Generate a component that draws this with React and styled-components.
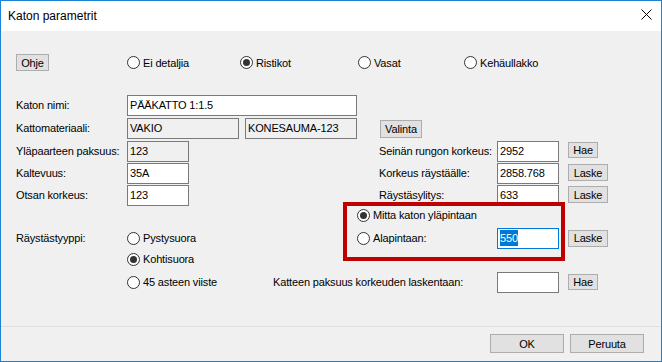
import React from "react";
import styled, { createGlobalStyle } from "styled-components";

const GlobalStyle = createGlobalStyle`
  html, body {
    margin: 0;
    padding: 0;
    background: #ffffff;
  }
`;

const Window = styled.div`
  width: 662px;
  height: 362px;
  box-sizing: border-box;
  border: 1px solid #1a83d6;
  display: flex;
  flex-direction: column;
  background: #f0f0f0;
  font-family: "Liberation Sans", Arial, sans-serif;
  font-size: 11px;
  letter-spacing: -0.15px;
  color: #000;
`;

const TitleBar = styled.div`
  height: 30px;
  flex: none;
  background: #fff;
  display: flex;
  align-items: center;
  justify-content: space-between;
  padding: 0 9px 0 7px;
  font-size: 12px;
  letter-spacing: 0;
  svg {
    margin-bottom: 3px;
  }
`;

const Body = styled.div`
  position: relative;
  flex: 1;
  padding: 23px 0 0 15px;
`;

const TopRow = styled.div`
  display: flex;
  align-items: center;
  height: 17px;
`;

const Cell = styled.div`
  width: ${(p) => p.$w}px;
  flex: none;
  display: flex;
  align-items: center;
`;

const Btn = styled.button`
  font: inherit;
  letter-spacing: inherit;
  color: #000;
  box-sizing: border-box;
  width: ${(p) => p.$w}px;
  height: ${(p) => p.$h || 17}px;
  margin-top: ${(p) => p.$mt || 0}px;
  padding: 0;
  background: #e1e1e1;
  border: 1px solid #adadad;
  border-radius: 0;
  grid-column: ${(p) => p.$col || "auto"};
  align-self: ${(p) => (p.$mt !== undefined ? "start" : "center")};
`;

const RadioLabel = styled.label`
  display: inline-flex;
  align-items: center;
  gap: 3px;
  white-space: nowrap;
  grid-column: ${(p) => p.$col || "auto"};
  padding-left: ${(p) => p.$pl || 0}px;
`;

const Circle = styled.span`
  width: 13px;
  height: 13px;
  box-sizing: border-box;
  border: 1px solid #333;
  border-radius: 50%;
  background: #fff;
  display: flex;
  align-items: center;
  justify-content: center;
  &::after {
    content: "";
    width: 7px;
    height: 7px;
    border-radius: 50%;
    background: #333;
    display: ${(p) => (p.$on ? "block" : "none")};
  }
`;

const MidGrid = styled.div`
  margin-top: 24px;
  display: grid;
  grid-template-columns: 111px 118px 134px 118px 71px 1fr;
  grid-template-rows: 23px 23px 22px 22px 21px;
  align-items: start;
`;

const Label = styled.div`
  height: 21px;
  line-height: 21px;
  white-space: nowrap;
  grid-column: ${(p) => p.$col || "auto"};
  align-self: ${(p) => p.$align || "start"};
`;

const Field = styled.div`
  width: ${(p) => p.$w}px;
  height: 21px;
  box-sizing: border-box;
  border: 1px solid ${(p) => (p.$focus ? "#0078d7" : "#7a7a7a")};
  background: ${(p) => (p.$ro ? "#f0f0f0" : "#fff")};
  padding: 0 2px;
  line-height: 19px;
  white-space: nowrap;
  overflow: hidden;
  grid-column: ${(p) => p.$col || "auto"};
  align-self: ${(p) => p.$align || "start"};
`;

const Sel = styled.span`
  background: #0078d7;
  color: #fff;
  padding: 2px 0;
`;

const LowerGrid = styled.div`
  display: grid;
  grid-template-columns: 111px 146px 70px 154px 71px 1fr;
  grid-template-rows: 18px 28px 14px 32px;
  align-items: center;
`;

const Highlight = styled.div`
  position: absolute;
  left: 342px;
  top: 171px;
  width: 222px;
  height: 59px;
  box-sizing: border-box;
  border: 4px solid #c00000;
  pointer-events: none;
`;

const Footer = styled.div`
  flex: none;
  border-top: 1px solid #dfdfdf;
  padding: 7px 17px 8px 0;
  display: flex;
  justify-content: flex-end;
  gap: 6px;
`;

function Radio({ on, children, col, pl }) {
  return (
    <RadioLabel $col={col} $pl={pl}>
      <Circle $on={on} />
      {children}
    </RadioLabel>
  );
}

export default function App() {
  return (
    <>
      <GlobalStyle />
      <Window>
        <TitleBar>
          <span>Katon parametrit</span>
          <svg width="11" height="11" viewBox="0 0 11 11">
            <path d="M0.5 0.5L10.5 10.5M10.5 0.5L0.5 10.5" stroke="#000" strokeWidth="1" />
          </svg>
        </TitleBar>

        <Body>
          <TopRow>
            <Cell $w={111}>
              <Btn $w={33}>Ohje</Btn>
            </Cell>
            <Cell $w={113}>
              <Radio>Ei detaljia</Radio>
            </Cell>
            <Cell $w={118}>
              <Radio on>Ristikot</Radio>
            </Cell>
            <Cell $w={106}>
              <Radio>Vasat</Radio>
            </Cell>
            <Cell $w={120}>
              <Radio>Kehäullakko</Radio>
            </Cell>
          </TopRow>

          <MidGrid>
            <Label>Katon nimi:</Label>
            <Field $w={230} $col="2 / 4">PÄÄKATTO 1:1.5</Field>
            <span style={{ gridColumn: "4 / 7" }} />

            <Label>Kattomateriaali:</Label>
            <Field $w={112} $ro>VAKIO</Field>
            <Field $w={112} $ro>KONESAUMA-123</Field>
            <Btn $w={42} $h={18} $mt={2} style={{ marginLeft: 1 }}>Valinta</Btn>
            <span style={{ gridColumn: "5 / 7" }} />

            <Label>Yläpaarteen paksuus:</Label>
            <Field $w={62} $ro>123</Field>
            <span />
            <Label>Seinän rungon korkeus:</Label>
            <Field $w={62}>2952</Field>
            <Btn $w={30} $h={16} $mt={1}>Hae</Btn>

            <Label>Kaltevuus:</Label>
            <Field $w={62}>35A</Field>
            <span />
            <Label>Korkeus räystäälle:</Label>
            <Field $w={62}>2858.768</Field>
            <Btn $w={40} $mt={1}>Laske</Btn>

            <Label>Otsan korkeus:</Label>
            <Field $w={62}>123</Field>
            <span />
            <Label>Räystäsylitys:</Label>
            <Field $w={62}>633</Field>
            <Btn $w={40} $mt={1}>Laske</Btn>
          </MidGrid>

          <LowerGrid>
            <Radio on col="4 / 7" pl={14}>Mitta katon yläpintaan</Radio>

            <Label $align="center">Räystästyyppi:</Label>
            <Radio>Pystysuora</Radio>
            <span />
            <Radio pl={14}>Alapintaan:</Radio>
            <Field $w={62} $focus $align="center">
              <Sel>550</Sel>
            </Field>
            <Btn $w={40}>Laske</Btn>

            <Radio on col="2 / 3">Kohtisuora</Radio>

            <Radio col="2 / 3">45 asteen viiste</Radio>
            <Label $col="3 / 5" $align="center">Katteen paksuus korkeuden laskentaan:</Label>
            <Field $w={62} $align="center"></Field>
            <Btn $w={30} $h={16}>Hae</Btn>
          </LowerGrid>

          <Highlight />
        </Body>

        <Footer>
          <Btn $w={74} $h={19}>OK</Btn>
          <Btn $w={74} $h={19}>Peruuta</Btn>
        </Footer>
      </Window>
    </>
  );
}
